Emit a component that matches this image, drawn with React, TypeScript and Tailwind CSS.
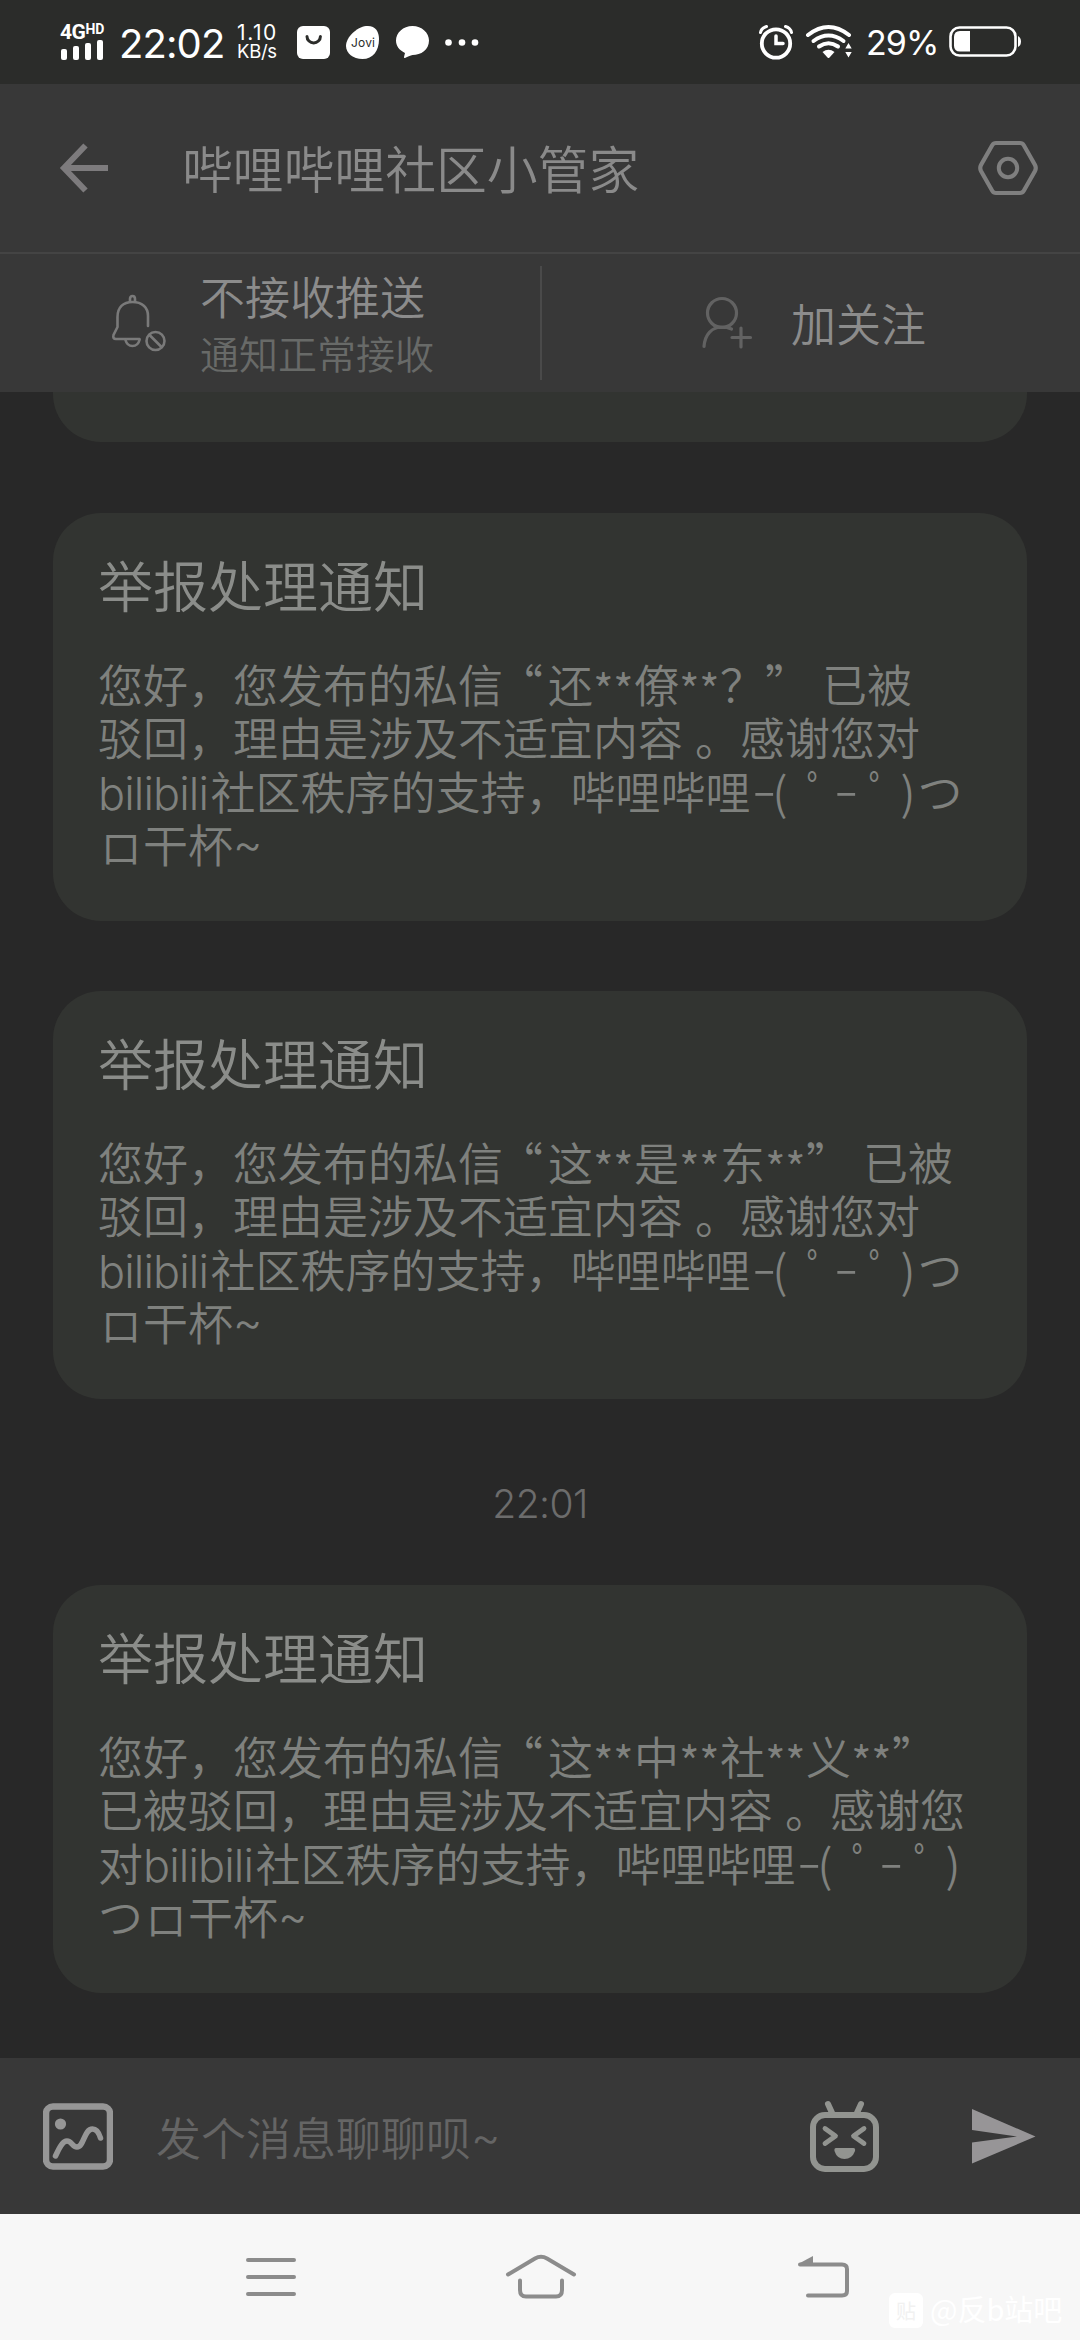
import type { ReactNode } from "react";

interface Notice {
  id: number;
  time?: string;
  lines: ReactNode[];
}

// Latin run inside the Chinese text
function Word({ children }: { children: string }) {
  return <span className="inline-block w-[112.5px] font-['Inter'] font-light tracking-[-0.9px]">{children}</span>;
}

function Stars() {
  return <span className="inline-block w-[41px] whitespace-nowrap align-[-5px] leading-none tracking-[-0.8px]">**</span>;
}

function Space() {
  return <span className="inline-block w-[12px]" />;
}

function OpenQuote() {
  return <span className="-ml-[5px] mr-[5px]">“</span>;
}

function Tilde() {
  return <span className="inline-block align-[3px] font-['Inter'] font-light leading-none">~</span>;
}

function Box() {
  return <span className="inline-block w-[45px] pl-[2px] align-[-1px] text-[42px] leading-none">ロ</span>;
}

function Kaomoji() {
  return (
    <>
      <span className="inline-block w-[22px]">
        <span className="inline-block origin-left scale-x-130 align-[2px] font-['Inter'] font-light leading-none">-</span>
      </span>
      <span className="inline-block w-[34px]">(</span>
      <span className="inline-block w-[26px]">ﾟ</span>
      <span className="inline-block w-[36px]">
        <span className="inline-block origin-left scale-x-130 align-[2px] font-['Inter'] font-light leading-none">-</span>
      </span>
      <span className="inline-block w-[32px]">ﾟ</span>
      <span className="inline-block w-[17px]">)</span>
    </>
  );
}

const notices: Notice[] = [
  {
    id: 1,
    lines: [
      <>您好，您发布的私信<OpenQuote />还<Stars />僚<Stars />？”<Space />已被</>,
      <>驳回，理由是涉及不适宜内容<Space />。感谢您对</>,
      <><Word>bilibili</Word>社区秩序的支持，哔哩哔哩<Kaomoji />つ</>,
      <><Box />干杯<Tilde /></>,
    ],
  },
  {
    id: 2,
    lines: [
      <>您好，您发布的私信<OpenQuote />这<Stars />是<Stars />东<Stars />”<Space />已被</>,
      <>驳回，理由是涉及不适宜内容<Space />。感谢您对</>,
      <><Word>bilibili</Word>社区秩序的支持，哔哩哔哩<Kaomoji />つ</>,
      <><Box />干杯<Tilde /></>,
    ],
  },
  {
    id: 3,
    time: "22:01",
    lines: [
      <>您好，您发布的私信<OpenQuote />这<Stars />中<Stars />社<Stars />义<Stars />”</>,
      <>已被驳回，理由是涉及不适宜内容<Space />。感谢您</>,
      <>对<Word>bilibili</Word>社区秩序的支持，哔哩哔哩<Kaomoji /></>,
      <>つ<Box />干杯<Tilde /></>,
    ],
  },
];

function StatusBar() {
  return (
    <div className="flex h-[84px] shrink-0 items-center bg-[#2b2c2a] pl-[60px] font-['Inter'] font-normal text-white">
      <div className="flex h-[36px] w-[59px] flex-col justify-between font-['Roboto']">
        <div className="flex items-start font-bold leading-none">
          <span className="text-[21px] leading-[16px] tracking-[-0.5px]">4G</span>
          <span className="text-[14px] leading-[11px]">HD</span>
        </div>
        <div className="flex items-end gap-[6px] pl-[1px]">
          <i className="h-[11px] w-[6px] rounded-[2px] bg-white" />
          <i className="h-[14px] w-[6px] rounded-[2px] bg-white" />
          <i className="h-[17px] w-[6px] rounded-[2px] bg-white" />
          <i className="h-[20px] w-[6px] rounded-[2px] bg-white" />
        </div>
      </div>
      <div className="w-[118px] pt-[4px] text-[40px] leading-[44px] tracking-[-0.9px]">22:02</div>
      <div className="w-[60px] text-[20px] leading-[19px]">
        <div className="text-[21px] tracking-[1.6px]">1.10</div>
        <div className="text-[18.500px] tracking-[-0.3px]">KB/s</div>
      </div>
      <svg width="184" height="36" viewBox="0 0 184 36" fill="white">
        <rect x="0" y="2" width="33" height="33" rx="6" />
        <path d="M10 12.5 a6.7 6.4 0 0 0 13.4 0" fill="none" stroke="#2b2c2a" strokeWidth="3" strokeLinecap="round" />
        <path d="M69 2 C78 1 82 7 82 15 C82 27 76 35 65.500 35 C56 35 49 29 49 22 C49 13 60 3 69 2 Z" />
        <text x="54" y="22.500" textLength="24" fontSize="12" fontFamily="Inter" fill="#2b2c2a">Jovi</text>
        <path d="M115.500 2 C125 2 132 9 132 16.500 C132 26 124 31 115.500 31 C112 32 110 33 108 34 C107 34 107 33.500 107 33 L108 29 C102 26 99 22 99 16.500 C99 9 106 2 115.500 2 Z" />
        <circle cx="151.500" cy="18.500" r="3.300" />
        <circle cx="165" cy="18.500" r="3.300" />
        <circle cx="178" cy="18.500" r="3.300" />
      </svg>
      <svg className="ml-auto" width="95" height="36" viewBox="0 0 95 36" fill="none" stroke="white" strokeLinecap="round">
        <circle cx="17" cy="19.500" r="14.200" strokeWidth="3.800" />
        <path d="M17 12 V19.500 H24" strokeWidth="3.500" />
        <path d="M1.500 8.500 Q2.500 4 7.500 2.500 M32.500 8.500 Q31.500 4 26.500 2.500" strokeWidth="3" />
        <path d="M49 11 Q69.500 -5 90 11" strokeWidth="4" />
        <path d="M54.500 17 Q69.500 6 84.500 17" strokeWidth="4" />
        <path d="M60 22.500 Q69.500 16 79 22.500" strokeWidth="4" />
        <path d="M63.500 28 Q69.500 23.500 75.500 28 L70.500 33.500 Q69.500 34.500 68.500 33.500 Z" fill="white" stroke="none" />
        <path d="M86.300 24.500 L89.500 19 L92.700 24.500 Z M86.300 28 L89.500 33.500 L92.700 28 Z" fill="white" stroke="none" />
      </svg>
      <div className="w-[95px] pl-[12px] pt-[2px] text-[34px] leading-[40px] tracking-[-0.9px]">29%</div>
      <svg className="mr-[58px] shrink-0" width="73" height="32" viewBox="0 0 73 32">
        <rect x="1.500" y="1.500" width="65" height="28" rx="9" fill="none" stroke="white" strokeWidth="2.600" />
        <path d="M21 5 V25.500 H11 Q5 25.500 5 19.500 V11 Q5 5 11 5 Z" fill="white" />
        <path d="M69 10 Q72 11.500 72 15.500 Q72 19.500 69 21 Z" fill="white" />
      </svg>
    </div>
  );
}

function Header() {
  return (
    <div className="flex h-[170px] shrink-0 items-center border-b-2 border-[#444444] bg-[#383838] pl-[59px] pr-[41px]">
      <svg width="50" height="50" viewBox="0 0 50 50" fill="none" stroke="#7d7b7d" strokeWidth="6">
        <path d="M26.500 2.500 L5 25 L26.500 47.500 M5 25 H49" />
      </svg>
      <h1 className="pb-[3px] pl-[73px] text-[50.8px] leading-[60px] text-[#8a8a8a]">哔哩哔哩社区小管家</h1>
      <svg className="ml-auto" width="62" height="56" viewBox="0 0 62 56" fill="none" stroke="#7f7f7f">
        <path d="M19 3 H43 Q45.500 3 46.800 5.200 L58 25 Q59.500 28 58 31 L46.800 50.800 Q45.500 53 43 53 H19 Q16.500 53 15.200 50.800 L4 31 Q2.500 28 4 25 L15.200 5.200 Q16.500 3 19 3 Z" strokeWidth="4.200" />
        <circle cx="31" cy="28" r="9.200" strokeWidth="4" />
      </svg>
    </div>
  );
}

function ActionBar() {
  return (
    <div className="flex h-[138px] shrink-0 items-center bg-[#383838]">
      <div className="flex w-[540px] items-center pl-[110px]">
        <svg width="58" height="60" viewBox="0 0 58 60" fill="none" stroke="#7a7a7a" strokeWidth="2.600" strokeLinecap="round">
          <path d="M20 8.500 V6 Q20 3 22.500 3 Q25 3 25 6 V8.500" />
          <path d="M38 33 V23 C38 14.500 32 9 22.500 9 C13 9 7.500 14.500 7.500 24 V34 L3.500 42 Q2.500 46 6 46 H29.500" />
          <path d="M15.500 47 Q17 53 22.500 53 Q28 53 29.500 47" />
          <circle cx="45.500" cy="48" r="9" />
          <path d="M39.500 42 L51.500 54" />
        </svg>
        <div className="pl-[32px] pt-[2px]">
          <div className="text-[45px] leading-[57px] text-[#8c8c8c]">不接收推送</div>
          <div className="text-[39px] leading-[57px] text-[#686a68]">通知正常接收</div>
        </div>
      </div>
      <div className="h-[114px] w-[2px] bg-[#4a4a4a]" />
      <div className="flex flex-1 items-center pl-[159px]">
        <svg width="54" height="54" viewBox="0 0 54 54" fill="none" stroke="#626262" strokeWidth="3.200" strokeLinecap="round">
          <circle cx="21" cy="17" r="14.500" />
          <path d="M3 50.500 C4 38 11 31 21 31 Q26 31 30.500 33" />
          <path d="M40 32 V51 M31 41.500 H49.500" />
        </svg>
        <div className="pl-[36px] text-[45px] leading-[58px] text-[#8c8c8c]">加关注</div>
      </div>
    </div>
  );
}

function NoticeCard({ notice }: { notice: Notice }) {
  return (
    <>
      {notice.time && (
        <div className="mb-[53px] mt-[76px] h-[57px] text-center font-['Inter'] text-[39px] font-light leading-[57px] tracking-[-0.6px] text-[#6c6c6c]">
          {notice.time}
        </div>
      )}
      <div className="h-[408px] rounded-[48px] bg-[#323431] pl-[45px] pt-[37px]">
        <h2 className="text-[55px] leading-[66px] text-[#8b8d8a]">举报处理通知</h2>
        <div className="pt-[41px] text-[45px] leading-[53.3px] text-[#7f817e]">
          {notice.lines.map((line, i) => (
            <div key={i} className="h-[53.3px] whitespace-nowrap">{line}</div>
          ))}
        </div>
      </div>
      {notice.id === 1 && <div className="h-[70px]" />}
    </>
  );
}

function InputBar() {
  return (
    <div className="flex h-[156px] shrink-0 items-center bg-[#383838] pl-[43px] pt-[2px]">
      <svg width="70" height="70" viewBox="0 0 70 70" fill="none" stroke="#969696" strokeLinecap="round" strokeLinejoin="round">
        <rect x="3" y="4.500" width="64" height="60" rx="7" strokeWidth="6.500" />
        <circle cx="17.500" cy="22" r="5.600" fill="#969696" stroke="none" />
        <path d="M12.500 54 C17 44 20 39 24 39 C29 39 29 45 34 45 C41 45 41 27 49.500 27 C54 27 56 31 57.500 36" strokeWidth="5.500" />
      </svg>
      <div className="flex-1 pl-[43px] text-[45px] leading-[60px] text-[#656565]">发个消息聊聊呗<Tilde /></div>
      <svg width="70" height="74" viewBox="0 0 70 74" fill="none" stroke="#929490" strokeLinecap="round" strokeLinejoin="round">
        <path d="M18 4 L23 15 M51 4 L46 15" strokeWidth="6" />
        <rect x="3" y="15" width="63" height="54" rx="12" strokeWidth="6" />
        <path d="M15 28.500 L25.500 36 L15 43.500 M54 28.500 L43.500 36 L54 43.500" strokeWidth="4.800" />
        <path d="M26 48 H43.500 Q45.500 48 45 51 Q42 59 34.500 59 Q27 59 24.500 51 Q24 48 26 48 Z" fill="#929490" stroke="none" />
      </svg>
      <svg className="ml-[92px] mr-[44px]" width="64" height="56" viewBox="0 0 64 56" fill="#979597">
        <path d="M0 0 L63.500 27.500 L0 54.500 V33.500 L45 27.500 L0 21 Z" />
      </svg>
    </div>
  );
}

function NavBar() {
  return (
    <div className="relative flex h-[126px] shrink-0 items-center bg-[#f7f7f7]">
      <svg className="ml-[246px]" width="50" height="40" viewBox="0 0 50 40" stroke="#8c8c8c" strokeWidth="4" strokeLinecap="round">
        <path d="M2 3 H48 M2 20 H48 M2 37 H48" />
      </svg>
      <svg className="ml-[209px]" width="72" height="46" viewBox="0 0 72 46" fill="none" stroke="#8c8c8c" strokeWidth="4" strokeLinecap="round">
        <path d="M3 20.500 L30 4.500 Q36 1 42 4.500 L69 20.500" />
        <path d="M15 26.500 V36 Q15 42.500 21 42.500 H51 Q57 42.500 57 36 V26.500" />
      </svg>
      <svg className="ml-[221px]" width="52" height="44" viewBox="0 0 52 44" fill="none" stroke="#8c8c8c" strokeWidth="4" strokeLinecap="round">
        <path d="M2 9.500 H44 Q49 9.500 49 14 V36 Q49 40.500 44 40.500 H10" />
        <path d="M1 8.500 L15 1 V9 Z" fill="#8c8c8c" stroke="none" />
      </svg>
      <div className="absolute bottom-[12px] left-[889px] flex items-center font-normal text-[#ffffff]">
        <div className="flex h-[35px] w-[34px] items-center justify-center rounded-[6px] bg-white text-[20px] text-[#f1f1f1]">贴</div>
        <div className="whitespace-nowrap pb-[4px] pl-[7px] text-[29px] leading-[31px]">@反b站吧</div>
      </div>
    </div>
  );
}

export default function App() {
  return (
    <div className="flex h-[2340px] w-[1080px] flex-col overflow-hidden bg-[#282828] font-['Noto_Sans_CJK_SC',sans-serif] font-[350]">
      <StatusBar />
      <Header />
      <ActionBar />
      <div className="min-h-0 flex-1 overflow-hidden px-[53px]">
        <div className="mb-[71px] h-[50px] rounded-b-[48px] bg-[#323431]" />
        {notices.map(notice => (
          <NoticeCard key={notice.id} notice={notice} />
        ))}
      </div>
      <InputBar />
      <NavBar />
    </div>
  );
}
